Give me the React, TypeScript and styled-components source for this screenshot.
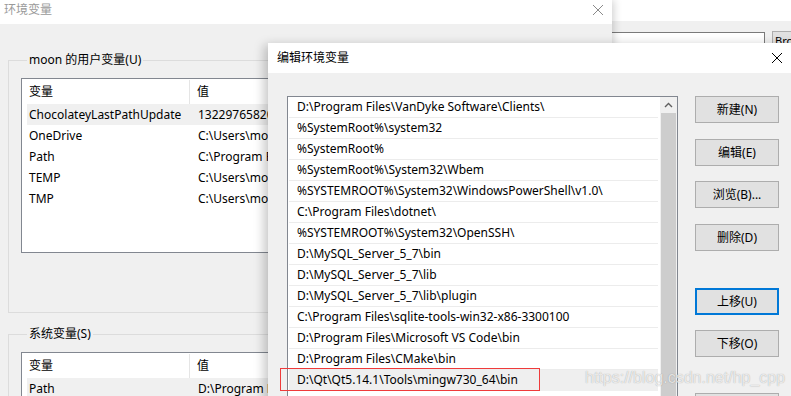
import styled, { createGlobalStyle } from 'styled-components';

const GlobalStyle = createGlobalStyle`
  html, body {
    margin: 0;
    padding: 0;
    background: #ffffff;
  }
  body {
    font-family: "Noto Sans", "Noto Sans CJK SC", sans-serif;
    font-size: 12px;
    line-height: 16px;
    color: #000;
  }
`;

const Desktop = styled.div`
  position: relative;
  width: 791px;
  height: 396px;
  overflow: hidden;
  background: #ffffff;
`;

/* window sitting behind both dialogs, on the right */
const BackWindow = styled.div`
  position: absolute;
  left: 600px;
  top: 0;
  width: 220px;
  height: 60px;
  display: flex;
  flex-direction: column;
  background: #ffffff;
`;

const BackBody = styled.div`
  flex: 1;
  margin-top: 21px;
  background: #f0f0f0;
  display: flex;
  align-items: flex-start;
  gap: 7px;
  padding: 11px 0 0 0;
`;

const BackInput = styled.div`
  width: 165px;
  height: 20px;
  border: 1px solid #7a7a7a;
  background: #fff;
  box-sizing: border-box;
`;

const BackButton = styled.div`
  width: 40px;
  height: 22px;
  box-sizing: border-box;
  border: 1px solid #adadad;
  background: #e1e1e1;
  font-size: 11px;
  padding: 1px 0 0 2px;
  overflow: hidden;
  margin-top: -1px;
`;

const EnvWindow = styled.div`
  position: absolute;
  left: 0;
  top: 0;
  width: 612px;
  height: 420px;
  display: flex;
  flex-direction: column;
  background: #f0f0f0;
  box-shadow: 2px 0 8px rgba(0, 0, 0, 0.18);
`;

const TitleBar = styled.div<{ $height: number; $inactive?: boolean }>`
  height: ${(p) => p.$height}px;
  flex: none;
  box-sizing: border-box;
  display: flex;
  align-items: center;
  justify-content: space-between;
  background: #ffffff;
  color: ${(p) => (p.$inactive ? '#9a9a9a' : '#000')};
  padding: 0 8px ${(p) => (p.$inactive ? 4 : 0)}px ${(p) => (p.$inactive ? 4 : 9)}px;
  font-size: 12px;
`;

const CloseIcon = ({ color }: { color: string }) => (
  <svg width="12" height="12" viewBox="0 0 12 12">
    <path d="M1 1 L11 11 M11 1 L1 11" stroke={color} strokeWidth="1" fill="none" />
  </svg>
);

const EnvBody = styled.div`
  flex: 1;
  display: flex;
  flex-direction: column;
  gap: 14px;
  padding: 29px 0 0 8px;
`;

const GroupBox = styled.fieldset<{ $height: number }>`
  margin: 0;
  height: ${(p) => p.$height}px;
  box-sizing: border-box;
  border: 1px solid #dcdcdc;
  border-right: none;
  padding: 11px 0 0 12px;

  legend {
    padding: 0 2px;
    margin-left: 6px;
    font-size: 12px;
    line-height: 14px;
  }
`;

const ListBox = styled.div<{ $height: number }>`
  height: ${(p) => p.$height}px;
  box-sizing: border-box;
  border: 1px solid #828790;
  border-right: none;
  background: #ffffff;
  padding: 1px 0 0 0;
  overflow: hidden;
`;

const HeaderRow = styled.div`
  display: grid;
  grid-template-columns: 168px 1fr;
  height: 24px;
  align-items: center;

  span {
    padding-left: 7px;
    height: 100%;
    display: flex;
    align-items: center;
  }
  span:first-child {
    border-right: 1px solid #e5e5e5;
  }
`;

const VarRow = styled.div<{ $selected?: boolean }>`
  display: grid;
  grid-template-columns: 168px 1fr;
  height: 21px;
  align-items: center;
  margin-left: 5px;
  background: ${(p) => (p.$selected ? '#f0f0f0' : 'transparent')};
  white-space: nowrap;
  overflow: hidden;

  span {
    padding-left: 2px;
    overflow: hidden;
  }
  span:last-child {
    padding-left: 3px;
    max-width: 80px;
  }
`;

const EditDialog = styled.div`
  position: absolute;
  left: 268px;
  top: 43px;
  width: 540px;
  height: 380px;
  display: flex;
  flex-direction: column;
  background: #f0f0f0;
  box-shadow: -4px 2px 10px rgba(0, 0, 0, 0.22);
`;

const EditBody = styled.div`
  flex: 1;
  display: flex;
  align-items: flex-start;
  gap: 17px;
  padding: 23px 0 0 19px;
`;

const PathList = styled.div`
  width: 391px;
  height: 320px;
  box-sizing: border-box;
  border: 1px solid #828790;
  background: #ffffff;
  display: flex;
`;

const PathRows = styled.div`
  flex: 1;
  display: flex;
  flex-direction: column;
  padding: 0 2px 0 1px;
`;

const PathRow = styled.div<{ $selected?: boolean }>`
  height: 21px;
  flex: none;
  box-sizing: border-box;
  display: flex;
  align-items: center;
  padding-left: 8px;
  white-space: nowrap;
  overflow: hidden;
  line-height: 16px;
  border-bottom: 1px solid ${(p) => (p.$selected ? 'transparent' : '#ececec')};
  background: ${(p) => (p.$selected ? '#efefef' : 'transparent')};
`;

const ScrollBar = styled.div`
  width: 17px;
  flex: none;
  display: flex;
  flex-direction: column;
  background: #f0f0f0;
`;

const ScrollArrow = styled.div`
  height: 16px;
  display: flex;
  align-items: center;
  justify-content: center;
`;

const ScrollThumb = styled.div`
  flex: 1;
  margin: 0 1px;
  background: #cdcdcd;
`;

const ButtonColumn = styled.div`
  display: flex;
  flex-direction: column;
  width: 84px;
`;

const WinButton = styled.div<{ $gap: number; $focused?: boolean }>`
  height: 27px;
  margin-top: ${(p) => p.$gap}px;
  box-sizing: border-box;
  border: ${(p) => (p.$focused ? '2px solid #0078d7' : '1px solid #adadad')};
  background: #e1e1e1;
  display: flex;
  align-items: center;
  justify-content: center;
  font-size: 12px;
`;

const Highlight = styled.div`
  position: absolute;
  left: 280px;
  top: 368px;
  width: 260px;
  height: 23px;
  box-sizing: border-box;
  border: 1px solid #ef3b3b;
  pointer-events: none;
`;

const Watermark = styled.div`
  position: absolute;
  left: 585px;
  top: 368px;
  font-family: "Liberation Sans", Arial, sans-serif;
  font-size: 16px;
  line-height: 20px;
  color: rgba(255, 255, 255, 0.75);
  text-shadow: 0 0 1px rgba(0, 0, 0, 0.35);
  pointer-events: none;
  white-space: nowrap;
`;

const userVars = [
  ['ChocolateyLastPathUpdate', '132297658207'],
  ['OneDrive', 'C:\\Users\\moon\\OneDrive'],
  ['Path', 'C:\\Program Files'],
  ['TEMP', 'C:\\Users\\moon\\AppData'],
  ['TMP', 'C:\\Users\\moon\\AppData'],
];

const paths = [
  'D:\\Program Files\\VanDyke Software\\Clients\\',
  '%SystemRoot%\\system32',
  '%SystemRoot%',
  '%SystemRoot%\\System32\\Wbem',
  '%SYSTEMROOT%\\System32\\WindowsPowerShell\\v1.0\\',
  'C:\\Program Files\\dotnet\\',
  '%SYSTEMROOT%\\System32\\OpenSSH\\',
  'D:\\MySQL_Server_5_7\\bin',
  'D:\\MySQL_Server_5_7\\lib',
  'D:\\MySQL_Server_5_7\\lib\\plugin',
  'C:\\Program Files\\sqlite-tools-win32-x86-3300100',
  'D:\\Program Files\\Microsoft VS Code\\bin',
  'D:\\Program Files\\CMake\\bin',
  'D:\\Qt\\Qt5.14.1\\Tools\\mingw730_64\\bin',
];

const buttons = [
  { label: '新建(N)', gap: 0 },
  { label: '编辑(E)', gap: 16 },
  { label: '浏览(B)...', gap: 15 },
  { label: '删除(D)', gap: 16 },
  { label: '上移(U)', gap: 37, focused: true },
  { label: '下移(O)', gap: 15 },
  { label: '', gap: 36 },
];

export default function App() {
  return (
    <Desktop>
      <GlobalStyle />
      <BackWindow>
        <BackBody>
          <BackInput />
          <BackButton>Bro</BackButton>
        </BackBody>
      </BackWindow>

      <EnvWindow>
        <TitleBar $height={24} $inactive>
          <span>环境变量</span>
          <CloseIcon color="#8a8a8a" />
        </TitleBar>
        <EnvBody>
          <GroupBox $height={260}>
            <legend>moon 的用户变量(U)</legend>
            <ListBox $height={175}>
              <HeaderRow>
                <span>变量</span>
                <span>值</span>
              </HeaderRow>
              {userVars.map(([name, value], i) => (
                <VarRow key={name} $selected={i === 0}>
                  <span>{name}</span>
                  <span>{value}</span>
                </VarRow>
              ))}
            </ListBox>
          </GroupBox>
          <GroupBox $height={120}>
            <legend>系统变量(S)</legend>
            <ListBox $height={80}>
              <HeaderRow>
                <span>变量</span>
                <span>值</span>
              </HeaderRow>
              <VarRow $selected>
                <span>Path</span>
                <span>D:\Program Files</span>
              </VarRow>
            </ListBox>
          </GroupBox>
        </EnvBody>
      </EnvWindow>

      <EditDialog>
        <TitleBar $height={30}>
          <span>编辑环境变量</span>
          <span style={{ marginRight: 17, display: 'flex' }}>
            <CloseIcon color="#000" />
          </span>
        </TitleBar>
        <EditBody>
          <PathList>
            <PathRows>
              {paths.map((p, i) => (
                <PathRow key={p} $selected={i === paths.length - 1}>
                  {p}
                </PathRow>
              ))}
            </PathRows>
            <ScrollBar>
              <ScrollArrow>
                <svg width="9" height="6" viewBox="0 0 9 6">
                  <path d="M1 5 L4.5 1.5 L8 5" stroke="#606060" strokeWidth="1.4" fill="none" />
                </svg>
              </ScrollArrow>
              <ScrollThumb />
            </ScrollBar>
          </PathList>
          <ButtonColumn>
            {buttons.map((b, i) => (
              <WinButton key={i} $gap={b.gap} $focused={b.focused}>
                {b.label}
              </WinButton>
            ))}
          </ButtonColumn>
        </EditBody>
      </EditDialog>

      <Highlight />
      <Watermark>https://blog.csdn.net/hp_cpp</Watermark>
    </Desktop>
  );
}
